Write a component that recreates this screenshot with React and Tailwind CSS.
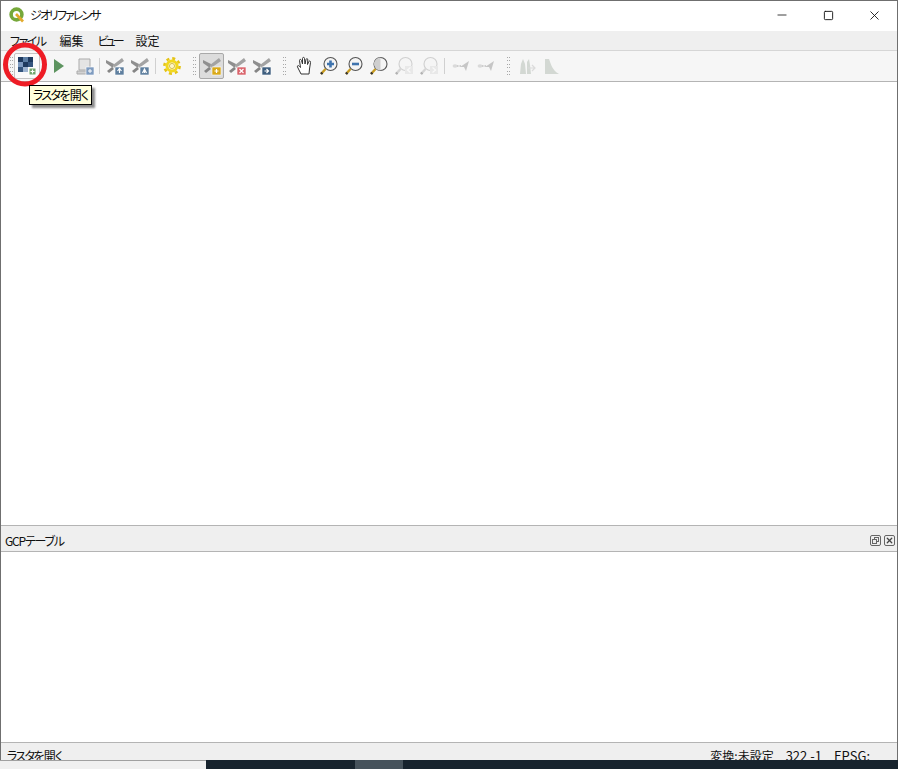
import { Minus, Square, X } from "lucide-react";

const font = "font-['Noto_Sans_CJK_JP','Noto_Sans',sans-serif] [font-feature-settings:'palt']";

const Handle = ({ className = "" }) => (
  <div className={`w-[3px] h-[18px] shrink-0 flex flex-col justify-between ${className}`}>
    {[0, 1, 2, 3, 4, 5].map((i) => (
      <div key={i} className="flex justify-between">
        <span className="w-px h-px bg-[#a8a8a8]" />
        <span className="w-px h-px bg-[#a8a8a8]" />
      </div>
    ))}
  </div>
);

const Sep = ({ className = "" }) => (
  <div className={`w-px h-[16px] bg-[#d0d0d0] shrink-0 ${className}`} />
);

const Btn = ({ children, className = "" }) => (
  <div className={`w-[25px] h-[26px] shrink-0 flex items-center justify-center ${className}`}>
    {children}
  </div>
);

const Ico = ({ children, op = 1 }) => (
  <svg width="20" height="20" viewBox="0 0 20 20" opacity={op}>
    {children}
  </svg>
);

// two gray wings used by the GCP tools
const Wings = () => (
  <>
    <path d="M1 4 L9 8 L8 12 L1 7 Z" fill="#8f8f8f" />
    <path d="M8 9 L17 2 L19 5 L9 12 Z" fill="#a3a3a3" />
    <path d="M2 15 L7 11 L9 13 L4 17 Z" fill="#858585" />
  </>
);

const GcpIcon = ({ badge, mark }) => (
  <Ico>
    <Wings />
    <rect x="10" y="11" width="9" height="8" fill={badge} stroke="#fff" strokeWidth="0.6" />
    <path d={mark} stroke="#fff" strokeWidth="1.2" fill="none" />
  </Ico>
);

const Magnifier = ({ children, light }) => (
  <Ico op={light ? 0.35 : 1}>
    <circle cx="11.5" cy="8" r="6.5" fill="#f5f5f5" stroke={light ? "#8a8a8a" : "#555"} strokeWidth="1.1" />
    <path d="M6.5 13 L2 18" stroke={light ? "#999" : "#c79a1d"} strokeWidth="2.4" />
    <path d="M3.4 16.6 L2 18" stroke="#333" strokeWidth="2.4" />
    {children}
  </Ico>
);

const GhostWings = () => (
  <Ico op={0.55}>
    <ellipse cx="4" cy="10" rx="2.4" ry="1.8" fill="#c4c4c4" />
    <path d="M6 10 L11 10" stroke="#9a9a9a" strokeWidth="1.6" strokeDasharray="1.5 1" />
    <path d="M9 11 L18 5 L15 15 L13 11 Z" fill="#a0a0a0" />
  </Ico>
);

const RasterLabel = () => (
  <>
    <span className="tracking-[-1.7px]">ラスタを</span>
    <span className="ml-[1px] tracking-[-0.8px]">開く</span>
  </>
);

const Toolbar = () => (
  <div className="h-[30px] shrink-0 bg-[#f6f6f6] flex items-center pl-[9px]">
    <Handle />
    <Btn className="ml-[1px] w-[26px] border border-[#c4c4c4] rounded-[2px] bg-[#fafafa]">
      <Ico>
        <rect x="1" y="1" width="5" height="5" fill="#1e3a5f" />
        <rect x="6" y="1" width="5" height="5" fill="#5b7da3" />
        <rect x="11" y="1" width="5" height="5" fill="#1e3a5f" />
        <rect x="1" y="6" width="5" height="5" fill="#7d9ac0" />
        <rect x="6" y="6" width="5" height="5" fill="#1e3a5f" />
        <rect x="11" y="6" width="5" height="5" fill="#34557e" />
        <rect x="1" y="11" width="5" height="5" fill="#34557e" />
        <rect x="6" y="11" width="5" height="5" fill="#9db4d1" />
        <rect x="12" y="12" width="7" height="7" fill="#6fa46a" stroke="#fff" />
        <path d="M15.5 13.5 V17.5 M13.5 15.5 H17.5" stroke="#fff" strokeWidth="1.2" />
      </Ico>
    </Btn>
    <Btn className="ml-[6px]">
      <svg width="12" height="14" viewBox="0 0 12 14">
        <path d="M1 0 L11 7 L1 14 Z" fill="#5d9460" />
      </svg>
    </Btn>
    <Btn className="ml-[1px]">
      <Ico>
        <path d="M4 3 H15 V14 H4 Z" fill="#e4e4e4" stroke="#ababab" />
        <path d="M2 15 H12 V18 H2 Z" fill="#d2d2d2" stroke="#ababab" />
        <rect x="11" y="11" width="8" height="8" fill="#7f9cc0" stroke="#fff" strokeWidth="0.6" />
        <path d="M13 15 H17 M15 13 V17" stroke="#fff" />
      </Ico>
    </Btn>
    <Sep className="ml-[2px]" />
    <Btn className="ml-[2px]">
      <GcpIcon badge="#5f7f9f" mark="M14.5 12.5 V17 M12.5 15 L14.5 12.5 L16.5 15" />
    </Btn>
    <Btn>
      <GcpIcon badge="#5f7f9f" mark="M14.5 12.5 V17 M12.5 17 L14.5 13 L16.5 17" />
    </Btn>
    <Sep className="ml-[3px]" />
    <Btn className="ml-[3px]">
      <svg width="18" height="18" viewBox="0 0 18 18">
        <circle cx="9" cy="9" r="7.6" fill="none" stroke="#e5c416" strokeWidth="2.6" strokeDasharray="3 2.97" />
        <circle cx="9" cy="9" r="5" fill="none" stroke="#f2d81f" strokeWidth="3" />
        <circle cx="9" cy="9" r="2.6" fill="#fdf6c8" stroke="#c9a90f" strokeWidth="0.7" />
      </svg>
    </Btn>
    <Handle className="ml-[9px]" />
    <Btn className="ml-[3px] border border-[#a9a9a9] rounded-[2px] bg-[#dcdcdc]">
      <GcpIcon badge="#d9a919" mark="M14.5 13 V17 M12.5 15 H16.5" />
    </Btn>
    <Btn>
      <GcpIcon badge="#d9636b" mark="M12.5 13 L16.5 17 M16.5 13 L12.5 17" />
    </Btn>
    <Btn>
      <GcpIcon badge="#3f5f7f" mark="M12.5 15 H16.5 M14.5 13 L16.5 15 L14.5 17" />
    </Btn>
    <Handle className="ml-[9px]" />
    <Btn className="ml-[5px]">
      <Ico>
        <path
          d="M7 18 L3.5 11 C3 9.5 4.5 9 5.5 10.5 L6.5 11.5 L5.5 4.5 C5.5 3 7 3 7.5 4.5 L8.5 8 L8.5 2.5 C8.5 1 10.5 1 10.5 2.5 L11 8 L12 3.5 C12.5 2 14 2.5 13.8 4 L13.5 8.5 L14.8 5.5 C15.5 4.5 16.8 5 16.5 6.5 L15.5 13 L15 18 Z"
          fill="#fff"
          stroke="#333"
          strokeWidth="1"
        />
      </Ico>
    </Btn>
    <Btn>
      <Magnifier>
        <path d="M11.5 4.5 V11.5 M8 8 H15" stroke="#3f74ae" strokeWidth="2.6" />
      </Magnifier>
    </Btn>
    <Btn>
      <Magnifier>
        <path d="M8 8 H15" stroke="#3f74ae" strokeWidth="2.6" />
      </Magnifier>
    </Btn>
    <Btn>
      <Magnifier>
        <path d="M11.5 1.5 A6.5 6.5 0 0 0 11.5 14.5 Z" fill="#cfcfcf" />
      </Magnifier>
    </Btn>
    <Btn>
      <Magnifier light>
        <rect x="11" y="10" width="8" height="8" fill="#cfcfcf" />
        <path d="M16.5 11.5 L13.5 14 L16.5 16.5" stroke="#fff" strokeWidth="1.3" fill="none" />
      </Magnifier>
    </Btn>
    <Btn>
      <Magnifier light>
        <rect x="11" y="10" width="8" height="8" fill="#cfcfcf" />
        <path d="M13.5 11.5 L16.5 14 L13.5 16.5" stroke="#fff" strokeWidth="1.3" fill="none" />
      </Magnifier>
    </Btn>
    <Sep className="ml-[3px]" />
    <Btn className="ml-[3px]">
      <GhostWings />
    </Btn>
    <Btn>
      <GhostWings />
    </Btn>
    <Handle className="ml-[9px]" />
    <Btn className="ml-[4px]">
      <Ico op={0.45}>
        <path d="M3 18 L4 8 L6 3 L8 8 L9 18 Z M10 18 L10 6 L12 3 L13 9 L14 18 Z" fill="#a9b5a9" />
        <path d="M11 12 H18 M15 9 L18 12 L15 15" stroke="#bbb" strokeWidth="1.2" fill="none" />
      </Ico>
    </Btn>
    <Btn>
      <Ico op={0.45}>
        <path d="M3 18 L3 3 L7 3 C9 8 10 14 17 18 Z" fill="#a9b5a9" />
      </Ico>
    </Btn>
  </div>
);

const App = () => (
  <div className={`w-[898px] h-[769px] overflow-hidden relative flex flex-col bg-[#f0f0f0] ${font}`}>
    {/* Window */}
    <div className="h-[760px] shrink-0 flex flex-col border border-b-0 border-[#6f6f6f] text-[#111]">
      {/* Title bar */}
      <div className="h-[30px] shrink-0 bg-white flex items-center pl-[8px] pb-[2px]">
        <svg width="16" height="16" viewBox="0 0 16 16">
          <circle cx="7.5" cy="7.5" r="5.4" fill="none" stroke="#76a83a" strokeWidth="3.6" />
          <path d="M7 7 L14 14.5" stroke="#e2a92a" strokeWidth="2.6" />
        </svg>
        <span className="ml-[5px] text-[12px] leading-none tracking-[-1.9px]">ジオリファレンサ</span>
        <div className="ml-auto flex items-center">
          <Btn className="w-[46px]">
            <Minus size={14} strokeWidth={1.5} color="#222" />
          </Btn>
          <Btn className="w-[46px]">
            <Square size={11} strokeWidth={2} color="#111" />
          </Btn>
          <Btn className="w-[46px]">
            <X size={15} strokeWidth={1.4} color="#111" />
          </Btn>
        </div>
      </div>
      {/* Menu */}
      <div className="h-[19px] shrink-0 bg-[#efefef] flex items-center pl-[9px] gap-[14px] text-[12px] leading-none border-b border-[#d6d6d6] box-content">
        <span className="tracking-[-1.5px]">ファイル</span>
        <span>編集</span>
        <span className="tracking-[-3px]">ビュー</span>
        <span>設定</span>
      </div>
      <Toolbar />
      {/* Map canvas */}
      <div className="h-[445px] shrink-0 bg-white border-y border-[#b4b4b4]" />
      {/* GCP dock */}
      <div className="h-[25px] shrink-0 bg-[#efefef] flex items-center pl-[4px] pr-[2px] pt-[4px] text-[12px] leading-none">
        <span className="tracking-[-1.2px]">GCPテーブル</span>
        <div className="ml-auto flex gap-[3px]">
          <div className="w-[11px] h-[11px] border border-[#666] rounded-[2px] relative">
            <div className="absolute left-[3px] top-[1px] w-[5px] h-[5px] border border-[#666]" />
            <div className="absolute left-[1px] top-[3px] w-[5px] h-[5px] border border-[#666] bg-[#efefef]" />
          </div>
          <div className="w-[11px] h-[11px] border border-[#666] rounded-[2px] flex items-center justify-center">
            <X size={9} strokeWidth={3.4} color="#444" />
          </div>
        </div>
      </div>
      <div className="h-[192px] shrink-0 bg-white border-y border-[#b4b4b4]" />
      {/* Status bar */}
      <div className="flex-1 min-h-0 overflow-hidden bg-[#efefef] flex items-start pl-[6px] pr-[27px] pt-[5px] text-[12px] leading-[15px]">
        <span>
          <RasterLabel />
        </span>
        <span className="ml-auto">変換:未設定</span>
        <span className="ml-[12px] text-[13px]">322 -1</span>
        <span className="ml-[12px] text-[13px]">EPSG:</span>
      </div>
    </div>
    {/* Strip of the desktop below the window */}
    <div className="flex-1 flex">
      <div className="w-[206px] bg-[#f0f0f0] border-t border-[#a0a0a0]" />
      <div className="w-[149px] bg-[#17232d]" />
      <div className="w-[48px] bg-[#46525b]" />
      <div className="flex-1 bg-[#17232d]" />
    </div>
    {/* Red annotation circle */}
    <svg className="absolute left-[3px] top-[41px]" width="46" height="48" viewBox="0 0 46 48">
      <ellipse cx="22" cy="23.5" rx="19.5" ry="19.5" fill="none" stroke="#ee1c25" strokeWidth="5" />
    </svg>
    {/* Tooltip */}
    <div className="absolute left-[29px] top-[85px] h-[20px] px-[3px] flex items-center bg-[#ffffdc] border border-black shadow-[3px_3px_2px_rgba(0,0,0,0.45)] text-[12px] leading-none text-black">
      <RasterLabel />
    </div>
  </div>
);

export default App;
